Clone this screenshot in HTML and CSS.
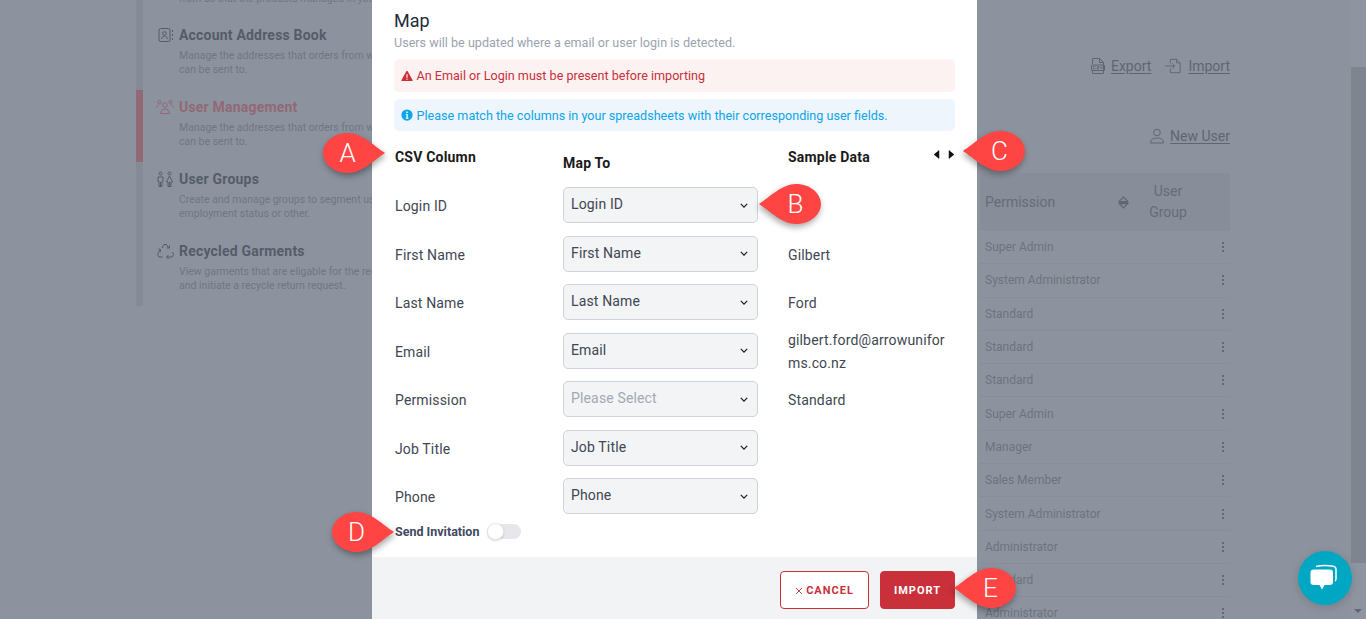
FILE: index.html
```html
<!DOCTYPE html>
<html lang="en">
  <head>
    <meta charset="UTF-8" />
    <meta name="viewport" content="width=device-width, initial-scale=1.0" />
    <title>User Management - Import Map</title>
    <link rel="stylesheet" href="styles.css">
  </head>
  <body>
    <div class="page">
      <nav class="sidebar">
        <div class="nav-item nav-top">
          <div class="nav-text">
            <p>View as more the products managed in your account<br>from so that the products managed in your account</p>
          </div>
        </div>
        <div class="nav-item">
          <svg class="nav-icon" viewBox="0 0 16 16"><rect x="1" y="1.500" width="11" height="13" rx="1.500"/><circle cx="6.500" cy="6.500" r="1.800"/><path d="M3.500 12c.3-2 1.500-2.800 3-2.800s2.700.8 3 2.800M14.500 3v2M14.500 7v2M14.500 11v2"/></svg>
          <div class="nav-text">
            <div class="nav-title">Account Address Book</div>
            <p>Manage the addresses that orders from within your account<br>can be sent to.</p>
          </div>
        </div>
        <div class="nav-item active">
          <svg class="nav-icon wide" viewBox="0 0 18 16"><circle cx="9" cy="6" r="2.300"/><path d="M4.500 14.500c0-3 2-4.500 4.500-4.500s4.500 1.500 4.500 4.500z"/><circle cx="3.500" cy="3" r="1.600"/><circle cx="14.500" cy="3" r="1.600"/><path d="M.5 8.500c.3-1.800 1.500-2.700 3-2.700M17.500 8.500c-.3-1.800-1.500-2.700-3-2.700"/></svg>
          <div class="nav-text">
            <div class="nav-title">User Management</div>
            <p>Manage the addresses that orders from within your account<br>can be sent to.</p>
          </div>
        </div>
        <div class="nav-item">
          <svg class="nav-icon wide" viewBox="0 0 18 16"><circle cx="4.500" cy="2.500" r="1.500"/><circle cx="13.500" cy="2.500" r="1.500"/><path d="M2 6h5v4.500H6v5H3v-5H2zM4.500 11v4.500M13.500 5l3 6h-1.500v4.500h-3V11h-1.500zM13.500 11v4.500"/></svg>
          <div class="nav-text">
            <div class="nav-title">User Groups</div>
            <p>Create and manage groups to segment users by location,<br>employment status or other.</p>
          </div>
        </div>
        <div class="nav-item">
          <svg class="nav-icon wide" viewBox="0 0 18 16"><path d="M6 5 8 1.500h2.500L12.500 5M11 5h2.500V2.500M4 7 1.500 11.500 3 14h3.500M5 6.500 2.500 6M4.500 9 4 6.500M16.500 9l1 2.500-1.500 2.500h-5M12.500 12l-2 2 2 2"/></svg>
          <div class="nav-text">
            <div class="nav-title">Recycled Garments</div>
            <p>View garments that are eligable for the recycle programme<br>and initiate a recycle return request.</p>
          </div>
        </div>
      </nav>

      <main class="content">
        <div class="toolbar">
          <a class="tool-link">
            <svg viewBox="0 0 14 16"><path d="M1.500 6V.5h7l4 4V15.500h-11V13M8.500.5v4h4"/><rect x=".5" y="7" width="13" height="5.500" rx=".5"/><path class="csv" d="M2.500 8.500h2M2.500 11h2M2.500 8.500V11M6 8.500H8V9.700H6V11H8M9.500 8.500 10.500 11 11.500 8.500"/></svg>
            <span>Export</span>
          </a>
          <a class="tool-link">
            <svg class="wide" viewBox="0 0 20 18"><path d="M7 6V1.500h7l4 4V16.500H7V12M14 1.500v4h4M1 9h11M9 6l3 3-3 3"/></svg>
            <span>Import</span>
          </a>
        </div>
        <div class="new-user">
          <a class="tool-link">
            <svg viewBox="1 0 14 16"><circle cx="8" cy="4.500" r="3.300"/><path d="M1.500 15c0-3.500 2.500-5 6.500-5s6.500 1.500 6.500 5z"/></svg>
            <span>New User</span>
          </a>
        </div>
        <div class="table-head">
          <span class="col-permission">Permission</span>
          <svg class="sort" viewBox="0 0 10 12"><path d="M1 5 5 1l4 4zM1 7l4 4 4-4zM1 6h8"/></svg>
          <span class="col-group">User Group</span>
        </div>
        <div class="table-row"><span>Super Admin</span><i class="dots"></i></div>
        <div class="table-row"><span>System Administrator</span><i class="dots"></i></div>
        <div class="table-row"><span>Standard</span><i class="dots"></i></div>
        <div class="table-row"><span>Standard</span><i class="dots"></i></div>
        <div class="table-row"><span>Standard</span><i class="dots"></i></div>
        <div class="table-row"><span>Super Admin</span><i class="dots"></i></div>
        <div class="table-row"><span>Manager</span><i class="dots"></i></div>
        <div class="table-row"><span>Sales Member</span><i class="dots"></i></div>
        <div class="table-row"><span>System Administrator</span><i class="dots"></i></div>
        <div class="table-row"><span>Administrator</span><i class="dots"></i></div>
        <div class="table-row"><span>Standard</span><i class="dots"></i></div>
        <div class="table-row"><span>Administrator</span><i class="dots"></i></div>
      </main>

      <div class="scrollbar">
        <div class="scroll-arrow"></div>
        <div class="scroll-thumb"></div>
        <div class="scroll-arrow down"></div>
      </div>
    </div>

    <section class="modal">
      <div class="modal-body">
        <h3>Map</h3>
        <p class="subtitle">Users will be updated where a email or user login is detected.</p>
        <div class="alert alert-red">
          <svg viewBox="0 0 16 16"><path d="M8 1.200c.4 0 .7.2.9.6l6.500 11.500c.4.700-.1 1.500-.9 1.500h-13c-.8 0-1.300-.8-.9-1.500L7.100 1.800c.2-.4.500-.6.900-.6z"/><path class="mark" d="M7.200 5.500h1.600l-.2 5H7.400zM7.200 11.500h1.600v1.500H7.200z"/></svg>
          An Email or Login must be present before importing
        </div>
        <div class="alert alert-blue">
          <svg viewBox="0 0 16 16"><circle cx="8" cy="8" r="7.500"/><path class="mark" d="M7 3.300h2v2H7zM6.500 6.700H9v5h1v1.200H6.300v-1.200h1v-3.800h-.8z"/></svg>
          Please match the columns in your spreadsheets with their corresponding user fields.
        </div>

        <div class="map-grid">
          <div class="head head-csv">CSV Column</div>
          <div class="head head-map">Map To</div>
          <div class="head head-sample">
            Sample Data
            <span class="pager">
              <svg viewBox="0 0 7 9"><path d="M6 .5v8L1 4.500z"/></svg>
              <svg viewBox="0 0 7 9"><path d="M1 .5v8l5-4z"/></svg>
            </span>
          </div>

          <label>Login ID</label>
          <select><option>Login ID</option></select>
          <div class="sample"></div>

          <label>First Name</label>
          <select><option>First Name</option></select>
          <div class="sample">Gilbert</div>

          <label>Last Name</label>
          <select><option>Last Name</option></select>
          <div class="sample">Ford</div>

          <label>Email</label>
          <select><option>Email</option></select>
          <div class="sample">gilbert.ford@arrowuniforms.co.nz</div>

          <label>Permission</label>
          <select class="empty"><option>Please Select</option></select>
          <div class="sample">Standard</div>

          <label>Job Title</label>
          <select><option>Job Title</option></select>
          <div class="sample"></div>

          <label>Phone</label>
          <select><option>Phone</option></select>
          <div class="sample"></div>
        </div>

        <div class="invite">
          <span>Send Invitation</span>
          <span class="toggle"><span class="knob"></span></span>
        </div>
      </div>

      <div class="modal-footer">
        <button class="btn btn-cancel"><svg class="times" viewBox="0 0 8 8"><path d="M1 1l6 6M7 1 1 7"/></svg>CANCEL</button>
        <button class="btn btn-import">IMPORT</button>
      </div>
    </section>

    <div class="callout tip-right callout-a"><svg viewBox="-26 -22 64 44"><path d="M37 0C26-7 14-20 0-20-15-20-25-10-25 0-25 10-15 20 0 20 14 20 26 7 37 0Z"/></svg><span>A</span></div>
    <div class="callout tip-left callout-b"><svg viewBox="-26 -22 64 44"><path d="M37 0C26-7 14-20 0-20-15-20-25-10-25 0-25 10-15 20 0 20 14 20 26 7 37 0Z"/></svg><span>B</span></div>
    <div class="callout tip-left callout-c"><svg viewBox="-26 -22 64 44"><path d="M37 0C26-7 14-20 0-20-15-20-25-10-25 0-25 10-15 20 0 20 14 20 26 7 37 0Z"/></svg><span>C</span></div>
    <div class="callout tip-right callout-d"><svg viewBox="-26 -22 64 44"><path d="M37 0C26-7 14-20 0-20-15-20-25-10-25 0-25 10-15 20 0 20 14 20 26 7 37 0Z"/></svg><span>D</span></div>
    <div class="callout tip-left callout-e"><svg viewBox="-26 -22 64 44"><path d="M37 0C26-7 14-20 0-20-15-20-25-10-25 0-25 10-15 20 0 20 14 20 26 7 37 0Z"/></svg><span>E</span></div>

    <div class="chat">
      <svg viewBox="0 0 30 28">
        <path class="chat-back" d="M6 2.500c4-1 11-1.200 16-.6 3 .3 4 1.300 4 3.300v9c0 1.500-.3 2.500-1 3"/>
        <path d="M4 5.500h15.500c2.500 0 3.500 1 3.500 3v9.500c0 2-1 3-3.500 3h-5L12 25.500 9.500 21H4c-2.500 0-3.500-1-3.500-3V8.500c0-2 1-3 3.500-3z"/>
      </svg>
    </div>
  </body>
</html>
```

FILE: styles.css
```css
* {
  box-sizing: border-box;
}

html, body {
  margin: 0;
  height: 619px;
  overflow: hidden;
}

body {
  font-family: Roboto, "Liberation Sans", sans-serif;
  background-color: #8c939e;
  color: #1f2937;
}

.page {
  display: flex;
  height: 619px;
  padding-left: 136px;
}

/* sidebar, dimmed behind the modal */
.sidebar {
  width: 300px;
  height: 360px;
  margin-top: -54px;
  flex: none;
  background-color: #8c939e;
}

.nav-item {
  display: flex;
  gap: 5px;
  height: 72px;
  padding: 7px 0 0 15px;
  border-left: 7px solid #848b96;
}

.nav-item.nav-top {
  padding: 28px 0 0 36px;
}

.nav-item.active {
  border-left-color: #936875;
}

.nav-icon {
  width: 16px;
  height: 16px;
  margin-top: 2px;
  flex: none;
  fill: none;
  stroke: #555c69;
  stroke-width: 1;
}

.nav-icon.wide {
  width: 18px;
  margin-left: -2px;
}

.nav-item.active .nav-icon {
  stroke: #936875;
}

.nav-text {
  width: 300px;
  flex: none;
  white-space: nowrap;
}

.nav-title {
  font-size: 14px;
  font-weight: 700;
  letter-spacing: .2px;
  line-height: 20px;
  color: #555c69;
}

.nav-item.active .nav-title {
  color: #936875;
}

.nav-text p {
  margin: 4px 0 0;
  font-size: 10.500px;
  line-height: 14px;
  color: #707682;
}

/* users table on the right */
.content {
  width: 250px;
  margin-left: auto;
  margin-right: 136px;
  flex: none;
}

.toolbar {
  display: flex;
  justify-content: flex-end;
  gap: 13px;
  margin-top: 56px;
  height: 20px;
}

.new-user {
  display: flex;
  justify-content: flex-end;
  margin-top: 50px;
  height: 47px;
}

.tool-link {
  display: flex;
  align-items: center;
  gap: 6px;
  height: 20px;
  font-size: 14px;
  color: #5f6672;
}

.tool-link span {
  text-decoration: underline;
  text-underline-offset: 2px;
}

.tool-link svg {
  width: 14px;
  height: 16px;
  fill: none;
  stroke: #5f6672;
  stroke-width: 1;
}

.tool-link svg.wide {
  width: 18px;
}

.tool-link .csv {
  stroke-width: .7;
}

.table-head {
  display: flex;
  align-items: center;
  height: 58px;
  padding-left: 5px;
  background-color: #878e99;
  font-size: 14px;
  color: #666c78;
}

.col-permission {
  width: 133px;
  padding-bottom: 1px;
}

.sort {
  width: 11px;
  height: 13px;
  fill: none;
  stroke: #5f6672;
  stroke-width: 1;
}

.col-group {
  width: 50px;
  margin-left: 14px;
  line-height: 21px;
  text-align: center;
}

.table-row {
  display: flex;
  align-items: center;
  justify-content: space-between;
  height: 33.300px;
  padding: 0 6px 0 5px;
  border-bottom: 1px solid #878e99;
  font-size: 12px;
  color: #6d737e;
}

.dots {
  width: 2px;
  height: 2px;
  border-radius: 50%;
  background-color: #555c69;
  box-shadow: 0 4px 0 #555c69, 0 -4px 0 #555c69;
}

.scrollbar {
  position: absolute;
  top: 0;
  right: 0;
  bottom: 0;
  width: 15px;
  display: flex;
  flex-direction: column;
  background-color: #8e95a0;
}

.scroll-thumb {
  height: 496px;
  margin-top: 52px;
  background-color: #7f858f;
}

.scroll-arrow {
  height: 15px;
}

.scroll-arrow.down {
  margin-top: auto;
  margin-left: 3px;
  width: 0;
  height: 0;
  margin-bottom: 6px;
  border-left: 4px solid transparent;
  border-right: 4px solid transparent;
  border-top: 4px solid #5f6672;
}

/* modal */
.modal {
  position: absolute;
  left: 372px;
  top: 0;
  bottom: 0;
  width: 605px;
  display: flex;
  flex-direction: column;
  background-color: #fff;
}

.modal-body {
  padding: 10px 22px 0;
  height: 557px;
}

.modal-body h3 {
  margin: 0;
  font-size: 18px;
  font-weight: 400;
  line-height: 22px;
  color: #222b38;
}

.subtitle {
  margin: 0 0 5px;
  font-size: 12.600px;
  line-height: 22px;
  color: #9ca3af;
}

.alert {
  display: flex;
  align-items: center;
  gap: 3.500px;
  height: 33px;
  margin-bottom: 7px;
  padding-left: 7px;
  border-radius: 5px;
  font-size: 12.600px;
}

.alert svg {
  width: 12px;
  height: 12px;
  flex: none;
}

.alert .mark {
  fill: #fff;
}

.alert-red {
  background-color: #fdf2f2;
  color: #c9303a;
}

.alert-red svg {
  fill: #c9303a;
}

.alert-blue {
  height: 32px;
  margin-bottom: 0;
  background-color: #eef5fd;
  color: #0ea5e9;
}

.alert-blue svg {
  fill: #0ea5e9;
}

.map-grid {
  display: grid;
  grid-template-columns: 169px 195px 1fr;
  grid-template-rows: 41px;
  grid-auto-rows: 48.500px;
  align-items: center;
  margin-top: 9px;
  font-size: 14px;
  letter-spacing: .15px;
  color: #3f4752;
}

.head {
  align-self: start;
  font-weight: 700;
  letter-spacing: .2px;
  color: #1a1a1a;
}

.head-csv {
  padding-top: 8px;
  padding-left: 1px;
  line-height: 18px;
}

.head-map {
  padding-top: 14px;
  line-height: 18px;
}

.head-sample {
  display: flex;
  justify-content: space-between;
  margin-left: 30px;
  padding-top: 8px;
  line-height: 18px;
}

.pager {
  display: flex;
  gap: 8px;
  margin-top: -5px;
  align-items: center;
}

.pager svg {
  width: 7px;
  height: 9px;
  fill: #111;
  stroke: #111;
  stroke-width: .5;
  stroke-linejoin: round;
}

.map-grid label {
  padding: 2px 0 0 1px;
}

.map-grid select {
  appearance: none;
  width: 195px;
  height: 36px;
  padding: 0 24px 2px 7px;
  border: 1px solid #cfd3d9;
  border-radius: 5px;
  background-color: #f3f4f6;
  background-image: url("data:image/svg+xml,%3Csvg xmlns='http://www.w3.org/2000/svg' viewBox='0 0 10 6'%3E%3Cpath d='M1 1l4 4 4-4' fill='none' stroke='%23222' stroke-width='1.600'/%3E%3C/svg%3E");
  background-repeat: no-repeat;
  background-position: right 9px center;
  background-size: 8px 5px;
  font-family: Roboto, "Liberation Sans", sans-serif;
  font-size: 14px;
  letter-spacing: .15px;
  color: #3f4752;
}

.map-grid select.empty {
  color: #a3a9b3;
}

.sample {
  margin-left: 30px;
  padding-top: 3px;
  line-height: 23px;
  word-break: break-all;
}

.invite {
  display: flex;
  align-items: center;
  gap: 8px;
  height: 24px;
  margin-top: -1px;
  padding-left: 1px;
  font-size: 12.500px;
  font-weight: 700;
  color: #3f4a5f;
}

.toggle {
  display: flex;
  align-items: center;
  width: 34px;
  height: 15px;
  border-radius: 8px;
  background-color: #e5e7eb;
}

.knob {
  width: 17px;
  height: 17px;
  border: 1px solid #e5e7eb;
  border-radius: 50%;
  background-color: #fff;
  box-shadow: 0 1px 2px rgba(0, 0, 0, .15);
}

.modal-footer {
  flex: 1;
  display: flex;
  justify-content: flex-end;
  gap: 11px;
  padding: 14px 22px 0;
  background-color: #f2f3f5;
}

.btn {
  height: 38px;
  border: 1px solid #c9303a;
  border-radius: 4px;
  font-family: Roboto, "Liberation Sans", sans-serif;
  font-size: 11px;
  font-weight: 700;
  letter-spacing: 1px;
}

.btn-cancel {
  width: 89px;
  background-color: #fff;
  color: #c9303a;
}

.times {
  width: 8px;
  height: 8px;
  margin-right: 3px;
  vertical-align: -1px;
  fill: none;
  stroke: #c9303a;
  stroke-width: .9;
}

.btn-import {
  width: 75px;
  background-color: #c9303a;
  color: #fff;
}

/* lettered markers drawn over the screenshot */
.callout {
  position: absolute;
  width: 64px;
  height: 44px;
}

.callout svg {
  display: block;
  width: 64px;
  height: 44px;
  fill: #ff4444;
  filter: drop-shadow(1px 3px 3px rgba(0, 0, 0, .35));
}

.callout span {
  position: absolute;
  top: 0;
  left: 0;
  width: 51px;
  line-height: 44px;
  text-align: center;
  font-size: 26px;
  font-weight: 300;
  color: #fff;
}

.callout.tip-left svg {
  transform: scaleX(-1);
}

.callout.tip-left span {
  left: 12px;
}

.callout-a { left: 322px; top: 131px; }
.callout-b { left: 758px; top: 182px; }
.callout-c { left: 962px; top: 129px; }
.callout-d { left: 331px; top: 510px; }
.callout-e { left: 953px; top: 566px; }

.chat {
  position: absolute;
  left: 1298px;
  top: 551px;
  width: 54px;
  height: 54px;
  display: flex;
  align-items: center;
  justify-content: center;
  border-radius: 50%;
  background-color: #00a7c3;
  box-shadow: 0 2px 8px rgba(0, 0, 0, .15);
}

.chat svg {
  width: 30px;
  height: 28px;
  fill: #fff;
}

.chat .chat-back {
  fill: none;
  stroke: #fff;
  stroke-width: 1.500;
}
```
